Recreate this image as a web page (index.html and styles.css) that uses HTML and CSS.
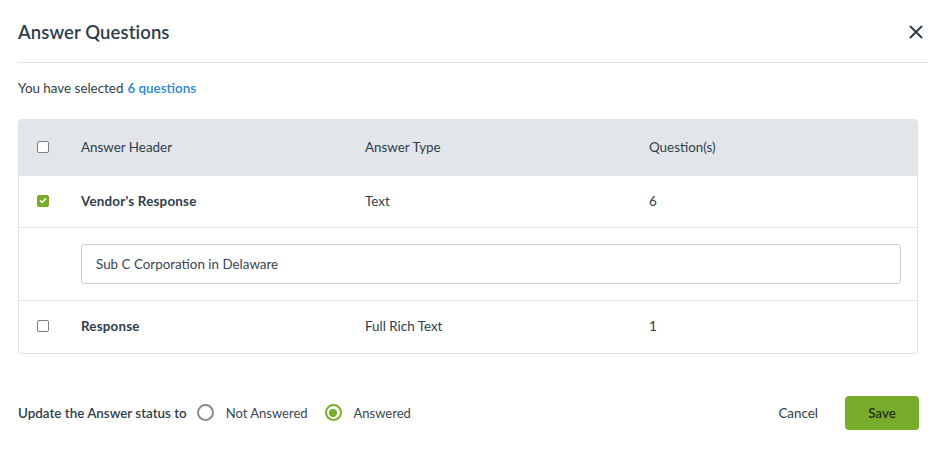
FILE: index.html
```html
<!DOCTYPE html>
<html>
<head>
<meta charset="utf-8">
<link rel="stylesheet" href="styles.css">
</head>
<body>
<div class="modal">
  <div class="head">
    <h1 class="title">Answer Questions</h1>
    <button class="close" aria-label="Close">
      <svg width="14" height="14" viewBox="0 0 14 14"><path d="M1.5 1.5 L12.5 12.5 M12.5 1.5 L1.5 12.5" stroke="#2f3d4c" stroke-width="2" stroke-linecap="round"/></svg>
    </button>
  </div>
  <p class="selected">You have selected <a class="link">6 questions</a></p>
  <div class="table">
    <div class="row header">
      <div class="cell check"><span class="cb"></span></div>
      <div class="cell c1">Answer Header</div>
      <div class="cell c2">Answer Type</div>
      <div class="cell c3">Question(s)</div>
    </div>
    <div class="row body r1">
      <div class="cell check"><span class="cb on"><svg width="8" height="7" viewBox="0 0 8 7"><path d="M1 3.6 L3 5.5 L7 1.3" fill="none" stroke="#fff" stroke-width="1.4"/></svg></span></div>
      <div class="cell c1 bold">Vendor's Response</div>
      <div class="cell c2">Text</div>
      <div class="cell c3">6</div>
    </div>
    <div class="row inputrow">
      <div class="input">Sub C Corporation in Delaware</div>
    </div>
    <div class="row body r3">
      <div class="cell check"><span class="cb"></span></div>
      <div class="cell c1 bold">Response</div>
      <div class="cell c2">Full Rich Text</div>
      <div class="cell c3">1</div>
    </div>
  </div>
  <div class="footer">
    <div class="status">
      <span class="label">Update the Answer status to</span>
      <span class="radio"></span><span class="ropt">Not Answered</span>
      <span class="radio on"></span><span class="ropt">Answered</span>
    </div>
    <div class="actions">
      <button class="cancel">Cancel</button>
      <button class="save">Save</button>
    </div>
  </div>
</div>
</body>
</html>
```
FILE: styles.css
```css
* { box-sizing: border-box; }
html, body { margin: 0; padding: 0; background: #fff; }
body { font-family: Lato, "Noto Sans", sans-serif; color: #2f3d4c; }
.modal { width: 943px; height: 460px; padding: 0 15px 0 18px; }
.head { height: 63px; display: flex; align-items: center; justify-content: space-between; border-bottom: 1px solid #dcdfe3; padding-top: 1px; }
.title { margin: 0; font-size: 18.5px; font-weight: 600; color: #2f3d4c; letter-spacing: 0.1px; }
.close { border: 0; background: none; padding: 0; margin-right: 5px; display: flex; cursor: pointer; }
.selected { margin: 0; height: 56px; display: flex; align-items: center; font-size: 13.4px; color: #2f3d4c; padding-bottom: 6px; }
.link { color: #2a86d6; font-weight: 600; margin-left: 4px; }
.table { width: 900px; border: 1px solid #dfe2e6; border-radius: 4px; overflow: hidden; }
.row { display: flex; align-items: center; font-size: 13.4px; }
.header { height: 55px; background: #e2e6ea; padding-bottom: 1px; }
.body { height: 52px; border-top: 1px solid #e1e4e8; padding-bottom: 2px; }
.r3 { height: 53px; }
.cell.check { width: 62px; padding-left: 18px; display: flex; align-items: center; }
.c1 { width: 284px; }
.c2 { width: 284px; }
.c3 { flex: 1; }
.bold { font-weight: 700; letter-spacing: 0.2px; }
.cb { width: 12px; height: 12px; border: 1.5px solid #7b7f84; border-radius: 2px; background: #fff; display: flex; align-items: center; justify-content: center; }
.cb.on { background: #7aac2b; border-color: #7aac2b; }
.inputrow { height: 73px; border-top: 1px solid #e1e4e8; padding-left: 62px; padding-right: 16px; padding-bottom: 1px; }
.input { flex: 1; height: 40px; border: 1px solid #c9cdd2; border-radius: 3px; display: flex; align-items: center; padding-left: 14px; font-size: 13.4px; color: #3a4654; }
.footer { display: flex; justify-content: space-between; align-items: center; margin-top: 42px; height: 34px; padding-right: 9px; }
.status { display: flex; align-items: center; font-size: 13.4px; padding-bottom: 1px; }
.label { font-weight: 600; margin-right: 10px; }
.radio { width: 17px; height: 17px; border: 2px solid #868a8f; border-radius: 50%; margin-right: 12px; display: inline-block; position: relative; }
.radio.on { border-color: #7aac2b; }
.radio.on::after { content: ""; position: absolute; left: 2.5px; top: 2.5px; width: 8px; height: 8px; border-radius: 50%; background: #7aac2b; }
.ropt { margin-right: 17px; color: #3a4654; font-size: 13px; }
.actions { display: flex; align-items: center; }
.cancel { border: 0; background: none; font-family: inherit; font-size: 13.4px; color: #2f3d4c; padding: 0; margin-right: 27px; }
.save { width: 74px; height: 34px; border: 0; border-radius: 4px; background: #7aac2b; color: #23301a; font-family: inherit; font-size: 13.4px; font-weight: 600; }
```
